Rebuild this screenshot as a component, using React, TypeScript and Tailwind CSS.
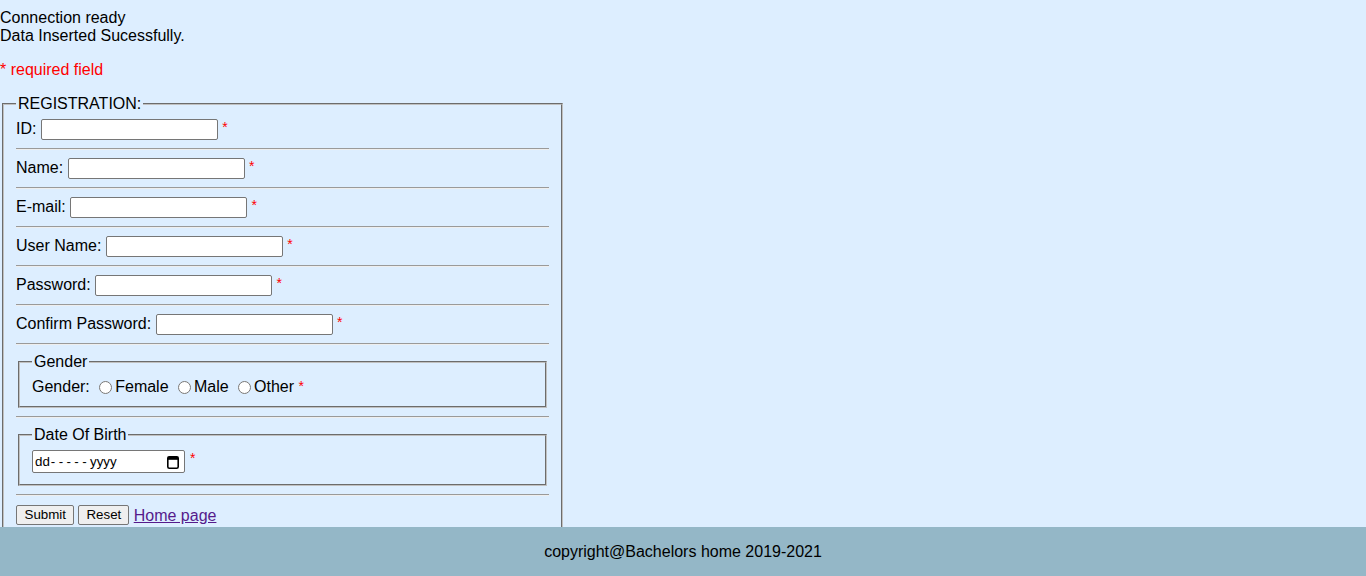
import React from 'react'

const rows = ['ID', 'Name', 'E-mail', 'User Name', 'Password', 'Confirm Password']

function Star({ className = '' }: { className?: string }) {
  return <span className={`text-[#ff0000] ${className}`}>*</span>
}

function Rule() {
  return <hr className="my-2 h-0 border-0 border-t border-b border-t-[#9a9a9a] border-b-[#eeeeee]" />
}

export default function App() {
  return (
    <div className="min-h-screen bg-[#ddeeff] font-['Liberation_Sans',Arial,sans-serif] text-[16px] leading-[normal] text-black">
      <div className="pt-[9px]">
        Connection ready
        <br />
        Data Inserted Sucessfully.
      </div>
      <p className="my-4 text-[#ff0000]">* required field</p>

      <form onSubmit={e => e.preventDefault()}>
        <fieldset className="mx-[2px] w-[561px] border-2 border-[#c0c0c0] [border-style:groove] px-3 pt-[5.6px] pb-[10px]">
          <legend className="px-[2px]">REGISTRATION:</legend>

          {rows.map(label => (
            <div key={label}>
              <div className="flex h-[21px] items-center">
                <label className="mr-[4.4px]">{label}:</label>
                <input
                  type={label.includes('Password') ? 'password' : 'text'}
                  className="h-[21px] w-[177px] rounded-[2px] border border-[#767676] bg-white px-[2px] text-[13.33px]"
                />
                <Star className="ml-[4.4px] self-start text-[14px]" />
              </div>
              <Rule />
            </div>
          ))}

          {/* 性別 */}
          <fieldset className="mx-[2px] border-2 border-[#c0c0c0] [border-style:groove] px-3 pt-[5.6px] pb-[10px]">
            <legend className="px-[2px]">Gender</legend>
            <div className="flex h-[20px] items-center pt-[2px]">
              <span>Gender:</span>
              {['Female', 'Male', 'Other'].map(g => (
                <label key={g} className="ml-[4.4px] flex items-center">
                  <input type="radio" name="gender" className="ml-[5px] mr-[3px] h-[13px] w-[13px] accent-[#767676]" />
                  {g}
                </label>
              ))}
              <Star className="ml-[4.4px] self-start text-[14px]" />
            </div>
          </fieldset>
          <Rule />

          {/* 生年月日 */}
          <fieldset className="mx-[2px] border-2 border-[#c0c0c0] [border-style:groove] px-3 pt-[5.6px] pb-[10px]">
            <legend className="px-[2px]">Date Of Birth</legend>
            <div className="flex h-[24px] items-center">
              <div className="flex h-[23px] w-[153px] items-center justify-between rounded-[2px] border border-[#767676] bg-white pl-[2px] pr-[5px] text-[13.33px]">
                <span>
                  dd<span className="pl-[1px] tracking-[3.4px]">-----</span>yyyy
                </span>
                <svg width="12" height="14" viewBox="0 0 12 14" fill="none">
                  <rect x="0.8" y="1.8" width="10.4" height="11.4" rx="1.5" stroke="#000" strokeWidth="1.6" />
                  <rect x="0.8" y="1.8" width="10.4" height="3" fill="#000" />
                </svg>
              </div>
              <Star className="ml-[5px] self-start text-[14px]" />
            </div>
          </fieldset>
          <Rule />

          <div className="flex h-[21px] items-end">
            <button type="submit" className="h-[20px] rounded-[2px] border border-[#767676] bg-[#efefef] px-[7.5px] text-[13.33px]">
              Submit
            </button>
            <button type="reset" className="ml-[4px] h-[20px] rounded-[2px] border border-[#767676] bg-[#efefef] px-[7px] text-[13.33px]">
              Reset
            </button>
            <a href="#" className="ml-[4.4px] text-[#551a8b] underline">Home page</a>
          </div>
          <div className="h-[40px]" />
        </fieldset>
      </form>

      <footer className="fixed inset-x-0 bottom-0 flex h-[49px] items-center justify-center bg-[#94b7c7]">
        copyright@Bachelors home 2019-2021
      </footer>
    </div>
  )
}
